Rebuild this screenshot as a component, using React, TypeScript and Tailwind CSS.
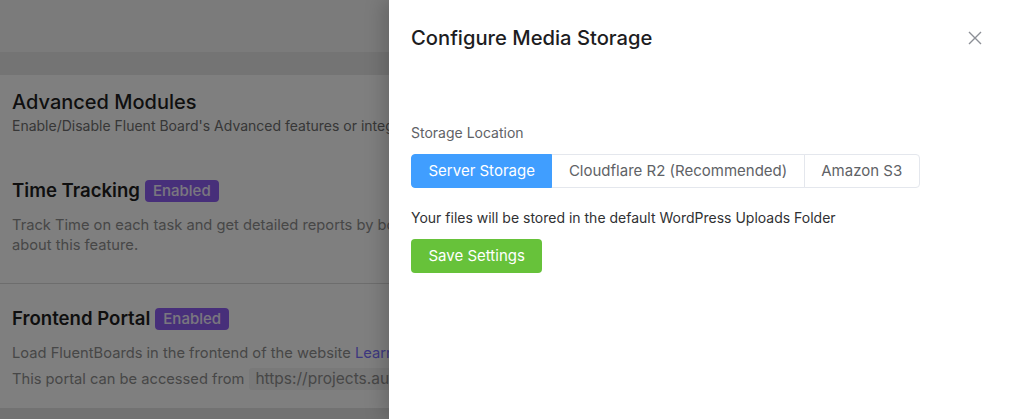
import { useState } from 'react';

const storageOptions = ['Server Storage', 'Cloudflare R2 (Recommended)', 'Amazon S3'];

const Badge = () => (
  <span className="ml-[5px] inline-flex h-[22px] items-center rounded-[4px] bg-[#8f5ef5] px-2 text-[15px] font-medium text-white/90">
    Enabled
  </span>
);

// page behind the drawer, only the visible left part is kept
const BackgroundPage = () => (
  <div className="flex h-full w-[389px] flex-col overflow-hidden">
    <div className="h-[52px] shrink-0 bg-[#f6f6f6]" />
    <div className="h-[23px] shrink-0 bg-[#e9e9e9]" />

    <div className="flex-1 bg-white">
      {/* Advanced Modules header */}
      <div className="px-3 pt-[13px]">
        <h2 className="text-[20px] leading-[28px] font-medium text-[#1f1f1f]">Advanced Modules</h2>
        <p className="whitespace-nowrap text-[14px] leading-[20px] text-[#6e6e6e]">
          Enable/Disable Fluent Board's Advanced features or integrations with other plugins
        </p>
      </div>

      {/* Time Tracking */}
      <div className="border-b border-[#dadada] px-3 pt-[43px] pb-[28px]">
        <div className="flex h-6 items-center">
          <h3 className="text-[18.6px] font-semibold text-[#1f1f1f]">Time Tracking</h3>
          <Badge />
        </div>
        <p className="mt-3 w-[700px] text-[14.7px] leading-[20px] text-[#8e8e8e]">
          Track Time on each task and get detailed reports by board, members and time range. Learn more about this feature.
        </p>
      </div>

      {/* Frontend Portal */}
      <div className="px-3 pt-[23px]">
        <div className="flex h-6 items-center">
          <h3 className="text-[18.6px] font-semibold text-[#1f1f1f]">Frontend Portal</h3>
          <Badge />
        </div>
        <p className="mt-3 whitespace-nowrap text-[14.7px] leading-[20px] text-[#8e8e8e]">
          Load FluentBoards in the frontend of the website <span className="text-[#7a70ff]">Learn more</span>
        </p>
        <p className="mt-[5px] flex items-center whitespace-nowrap text-[14.7px] leading-[20px] text-[#8e8e8e]">
          This portal can be accessed from
          <code className="ml-[5px] rounded-[3px] bg-[#f3f3f3] px-[6px] py-[1px] font-[Inter,sans-serif] text-[15.5px] text-[#8e8e8e]">
            https://projects.authlab.io/portal
          </code>
        </p>
      </div>
    </div>

    <div className="h-[11px] shrink-0 bg-[#e4e4e4]" />
  </div>
);

const StorageDrawer = () => {
  const [active, setActive] = useState(storageOptions[0]);

  return (
    <aside className="absolute top-0 right-0 flex h-full w-[635px] flex-col bg-white pl-[22px] shadow-[-6px_0_18px_rgba(0,0,0,0.18)]">
      <div className="flex items-center justify-between pt-[24px] pr-[39px]">
        <h1 className="text-[20.2px] leading-[28px] font-medium text-[#1d1d1f]">Configure Media Storage</h1>
        <button type="button" aria-label="Close" className="flex h-5 w-5 items-center justify-center text-[#8c8f96]">
          <svg width="14" height="14" viewBox="0 0 14 14" fill="none" stroke="currentColor" strokeWidth="1.4">
            <path d="M1 1l12 12M13 1L1 13" />
          </svg>
        </button>
      </div>

      <p className="mt-[71px] text-[14px] leading-[20px] text-[#606266]">Storage Location</p>

      <div className="mt-[11px] flex h-[34px] w-fit">
        {storageOptions.map((option, index) => {
          const isActive = option === active;
          return (
            <button
              key={option}
              type="button"
              onClick={() => setActive(option)}
              className={`flex items-center border px-[16.5px] text-[15px] ${
                index === 0 ? 'rounded-l-[4px]' : '-ml-px'
              } ${index === storageOptions.length - 1 ? 'rounded-r-[4px]' : ''} ${
                isActive ? 'z-10 border-[#409eff] bg-[#409eff] text-white' : 'border-[#e4e7ed] bg-white text-[#606266]'
              }`}
            >
              {option}
            </button>
          );
        })}
      </div>

      <p className="mt-5 text-[14px] leading-[20px] text-[#303133]">
        Your files will be stored in the default WordPress Uploads Folder
      </p>

      <button
        type="button"
        className="mt-[11px] flex h-[34px] w-fit items-center rounded-[4px] bg-[#67c23a] px-[17.5px] text-[15px] text-white"
      >
        Save Settings
      </button>
    </aside>
  );
};

export default function App() {
  return (
    <div className="relative h-[419px] w-[1024px] overflow-hidden bg-white font-[Inter,sans-serif]">
      <BackgroundPage />
      <div className="absolute inset-0 bg-black/50" />
      <StorageDrawer />
    </div>
  );
}
